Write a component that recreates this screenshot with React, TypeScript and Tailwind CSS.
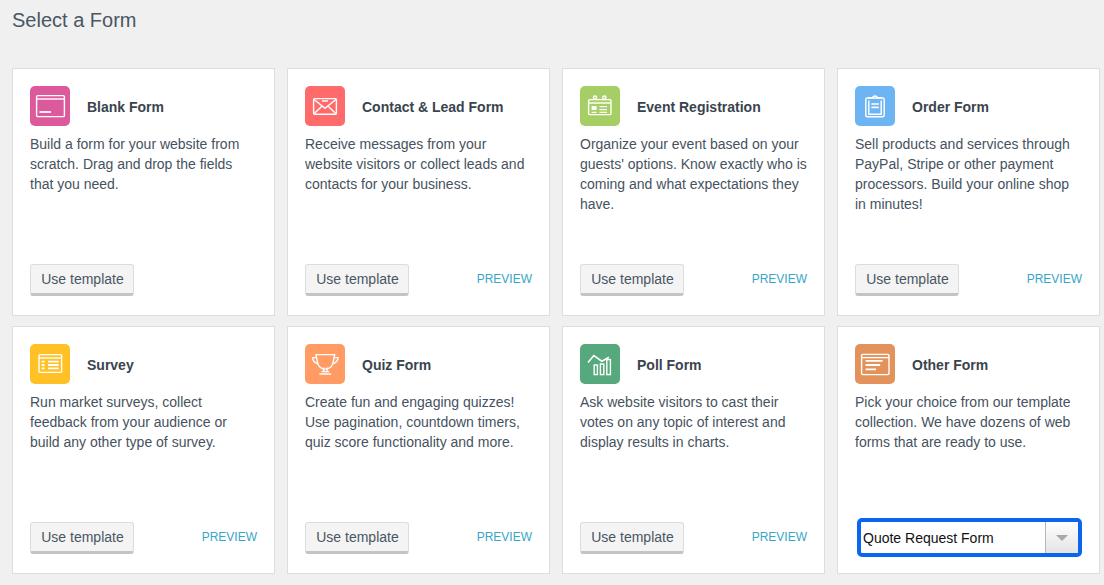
import type { ReactNode } from 'react';

const sans = "font-['Liberation_Sans',Arial,sans-serif]";

function Icon({ color, children }: { color: string; children: ReactNode }) {
  return (
    <div className={`w-10 h-10 rounded-[5px] shrink-0 ${color}`}>
      <svg viewBox="0 0 40 40" width="40" height="40" fill="none" stroke="#fff" strokeWidth="1.4">
        {children}
      </svg>
    </div>
  );
}

const BlankIcon = () => (
  <Icon color="bg-[#dc5a9c]">
    <rect x="6.6" y="9.6" width="27.8" height="21" rx="1.2" />
    <path d="M6.6 13h27.8" />
    <path d="M9.5 26h11.5" strokeWidth="1.8" />
  </Icon>
);

const MailIcon = () => (
  <Icon color="bg-[#ff6b6b]">
    <rect x="8.6" y="12.6" width="22.8" height="15.6" rx="1" />
    <path d="M8.8 13.2 20 22.4l11.2-9.2" />
    <path d="m9 27.8 7.6-7.4M31 27.8l-7.6-7.4" />
    <path d="M17 15h6" />
  </Icon>
);

const EventIcon = () => (
  <Icon color="bg-[#a5cf65]">
    <rect x="8.6" y="13.6" width="22.4" height="15" rx="1" />
    <path d="M8.6 17h22.4" />
    <circle cx="15" cy="11.6" r="1.6" />
    <circle cx="24.4" cy="11.6" r="1.6" />
    <rect x="11.6" y="20" width="5" height="4" fill="#fff" stroke="none" />
    <path d="M19.5 20.6h7.5M19.5 23.6h7.5M19.5 26.4h7.5M11.6 26.4h5" />
  </Icon>
);

const OrderIcon = () => (
  <Icon color="bg-[#6db5f2]">
    <rect x="10.8" y="12" width="18.4" height="18.8" rx="1.6" />
    <path d="M14 12.4v-.6h3.6a2.5 2.5 0 0 1 4.8 0H26v.6M13.8 14.6v13.6h12.4V14.6" />
    <path d="M16.4 18h7.4M16.4 21.4h7.4" strokeWidth="1.6" />
  </Icon>
);

const SurveyIcon = () => (
  <Icon color="bg-[#ffc125]">
    <rect x="9" y="10.6" width="22.6" height="17.8" rx="1" />
    <path d="M9 14h22.6" />
    <path d="M11.6 17.6h3M11.6 21h3M11.6 24.4h3M18 17.6h10.6M18 21h10.6M18 24.4h10.6" strokeWidth="1.8" />
  </Icon>
);

const QuizIcon = () => (
  <Icon color="bg-[#ff9b63]">
    <path d="M11 10.6h18.6l-1.2 6.4a8 8 0 0 1-16.2 0z" />
    <path d="M11.6 13.6H7.6c.2 3.6 2 5.6 6 6.2M29 13.6h4c-.2 3.6-2 5.6-6 6.2" />
    <path d="M18.6 23.4v4M22 23.4v4M14.4 30h11.8M16.6 27.6h7.4" />
  </Icon>
);

const PollIcon = () => (
  <Icon color="bg-[#56a97c]">
    <rect x="14.2" y="21" width="3.2" height="9.6" />
    <rect x="20.4" y="20" width="3.4" height="10.6" />
    <rect x="26.8" y="15.6" width="3.6" height="15" />
    <path d="M8 18.4 13.8 11.6l8 5.6 7.2-4" strokeWidth="1.6" />
  </Icon>
);

const OtherIcon = () => (
  <Icon color="bg-[#e2925a]">
    <rect x="6.6" y="10.4" width="27.4" height="20.2" rx="1" />
    <path d="M6.6 13.6h27.4" />
    <path d="M10.6 16.8h17M10.6 21h14.6M10.6 25.4h10.4" strokeWidth="1.8" />
  </Icon>
);

const cards = [
  { icon: <BlankIcon />, title: 'Blank Form', text: 'Build a form for your website from scratch. Drag and drop the fields that you need.', preview: false },
  { icon: <MailIcon />, title: 'Contact & Lead Form', text: 'Receive messages from your website visitors or collect leads and contacts for your business.', preview: true },
  { icon: <EventIcon />, title: 'Event Registration', text: "Organize your event based on your guests' options. Know exactly who is coming and what expectations they have.", preview: true },
  { icon: <OrderIcon />, title: 'Order Form', text: 'Sell products and services through PayPal, Stripe or other payment processors. Build your online shop in minutes!', preview: true },
  { icon: <SurveyIcon />, title: 'Survey', text: 'Run market surveys, collect feedback from your audience or build any other type of survey.', preview: true },
  { icon: <QuizIcon />, title: 'Quiz Form', text: 'Create fun and engaging quizzes! Use pagination, countdown timers, quiz score functionality and more.', preview: true },
  { icon: <PollIcon />, title: 'Poll Form', text: 'Ask website visitors to cast their votes on any topic of interest and display results in charts.', preview: true },
  { icon: <OtherIcon />, title: 'Other Form', text: 'Pick your choice from our template collection. We have dozens of web forms that are ready to use.', preview: false, select: true },
];

function QuoteSelect() {
  return (
    <div className="flex items-stretch w-[227px] h-[39px] ml-[2px] -mb-[3px] border-4 border-[#0a66ee] rounded-[5px] bg-white">
      <span className="flex-1 flex items-center pl-[2px] text-sm text-[#111]">Quote Request Form</span>
      <span className="w-[33px] flex items-center justify-center border-l border-[#b5b5b5] bg-gradient-to-b from-[#ffffff] to-[#e4e4e4]">
        <span className="w-0 h-0 border-x-[6px] border-x-transparent border-t-[6px] border-t-[#a8a8a8]" />
      </span>
    </div>
  );
}

export default function App() {
  return (
    <div className={`${sans} w-[1104px] h-[585px] overflow-hidden bg-[#f0f0f0] pl-3 pt-[8px]`}>
      <h1 className="text-xl leading-6 text-[#4a5662]">Select a Form</h1>
      <div className="grid grid-cols-[repeat(4,263px)] grid-rows-[repeat(2,248px)] gap-x-3 gap-y-[10px] mt-[36px]">
        {cards.map((c) => (
          <div key={c.title} className="flex flex-col bg-white border border-[#dedede] pl-[17px] pr-[17px] pt-[17px] pb-[19px]">
            <div className="flex items-center gap-[17px]">
              {c.icon}
              <h2 className="pt-[2px] text-sm font-bold text-[#39444e]">{c.title}</h2>
            </div>
            <p className="mt-2 text-sm leading-5 text-[#46525e]">{c.text}</p>
            <div className="mt-auto flex items-center justify-between">
              {c.select ? (
                <QuoteSelect />
              ) : (
                <button className="w-[104px] h-8 pl-[1px] rounded-[3px] border border-[#dcdcdc] border-b-[3px] border-b-[#c4c4c4] bg-[#f4f4f4] text-sm text-[#4a5662]">
                  Use template
                </button>
              )}
              {c.preview && <span className="text-xs text-[#37a6c8] -mt-[3px]">PREVIEW</span>}
            </div>
          </div>
        ))}
      </div>
    </div>
  );
}
